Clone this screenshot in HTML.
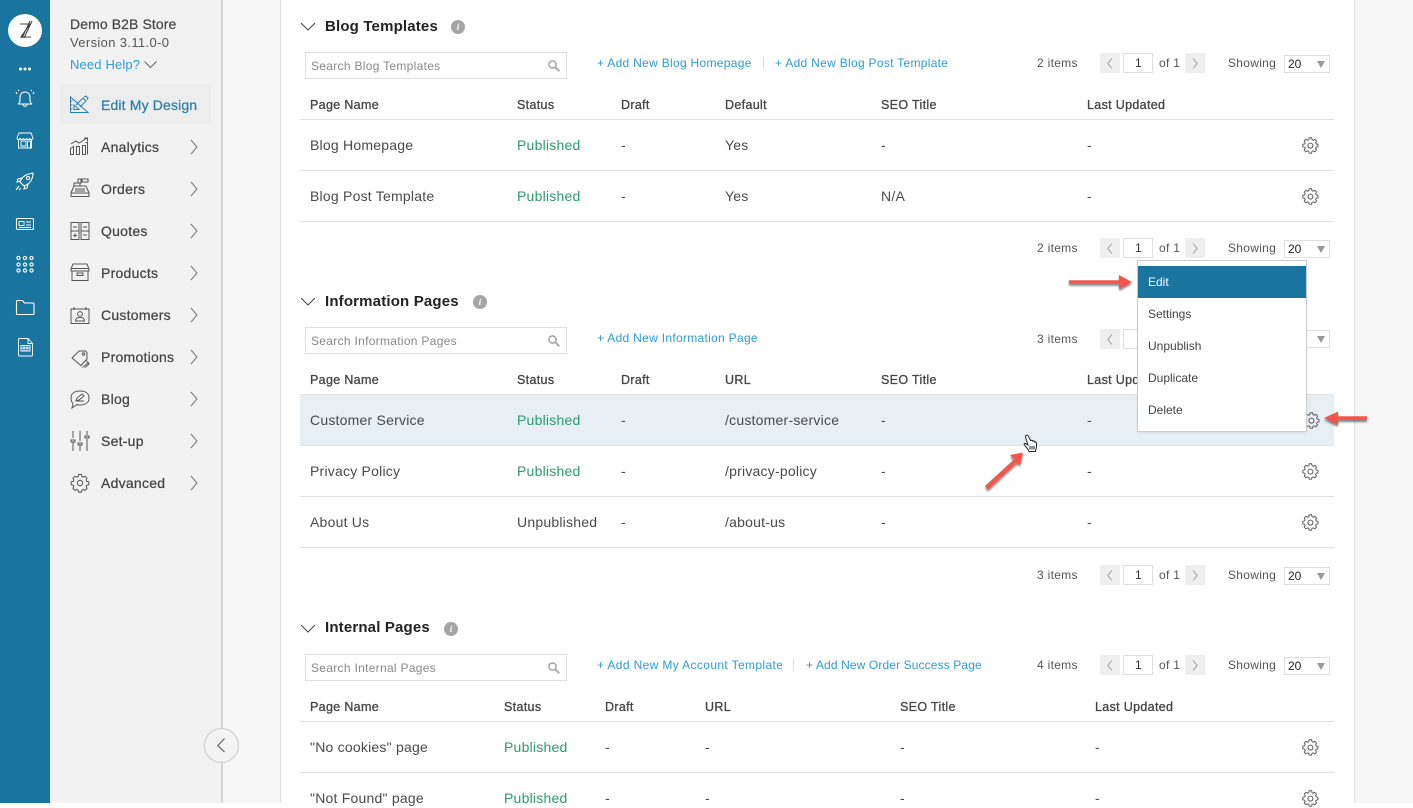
<!DOCTYPE html>
<html><head><meta charset="utf-8"><style>
html,body{margin:0;padding:0}
body{width:1413px;height:803px;overflow:hidden;position:relative;background:#fff;font-family:"Liberation Sans",sans-serif;font-size:14px;color:#4a4a4a}
.a{position:absolute}
.t{position:absolute;line-height:20px;white-space:nowrap;letter-spacing:.22px}
.h{font-size:12.5px;letter-spacing:.33px;color:#444;-webkit-text-stroke:.3px #444}
.g{color:#2c9a6c}
.l{color:#2d9cd6;font-size:12px;letter-spacing:.3px}
.s{font-size:12px;color:#555;letter-spacing:.3px}
.ttl{font-size:15px;font-weight:bold;color:#222;letter-spacing:.17px}
.ln{position:absolute;left:300px;width:1034px;height:1px;background:#e2e2e2}
.nav{font-size:14px;color:#444;left:101px;letter-spacing:.25px;-webkit-text-stroke:.25px #444}
.box{position:absolute;box-sizing:border-box;background:#fff;border:1px solid #dfdfdf}
.pg{position:absolute;width:20px;height:20px;background:#eee}
.tri{position:absolute;left:1317px;width:0;height:0;border-left:4px solid transparent;border-right:4px solid transparent;border-top:7px solid #999}
.m{position:absolute;left:1148px;font-size:12px;color:#444;line-height:20px}
svg{position:absolute;overflow:visible;fill:none}
.ic{stroke:#555;stroke-width:1}
.w{stroke:#fff;stroke-width:1.1}
</style></head><body>
<svg width="0" height="0" style="position:absolute"><defs>
<g id="gear"><g transform="translate(0 .4) scale(.94)"><path d="M6.200.700h2.600l.4 2 1.200.6 1.800-1 1.800 1.900-1 1.700.5 1.300 2 .5v2.600l-2 .5-.5 1.200 1 1.800-1.800 1.800-1.800-1-1.200.5-.5 2H6.200l-.4-2-1.300-.5-1.800 1-1.800-1.800 1-1.800-.5-1.200-2-.5V7.700l2-.5.5-1.300-1-1.700 1.800-1.900 1.800 1 1.300-.6z" transform="translate(.4 -.3)" stroke="#555" stroke-width="1"/><circle cx="7.900" cy="8.700" r="2.700" stroke="#555" stroke-width="1"/></g></g>
<g id="cr"><path d="M0 0l6 7-6 7" stroke="#777" stroke-width="1"/></g>
<g id="mag"><circle cx="4.500" cy="4.500" r="3.600" stroke="#aaa" stroke-width="1.600"/><path d="M7.300 7.300l4 4" stroke="#aaa" stroke-width="2"/></g>
<g id="dn"><path d="M0 0l7 7 7-7" stroke="#444" stroke-width="1"/></g>
<path id="pgc" d="M5 .5L.8 5.500 5 10.500M86 .5l4.200 5-4.200 5" stroke="#999" stroke-width=".9"/>
</defs></svg>

<!-- backgrounds -->
<div class="a" style="left:0;top:0;width:50px;height:803px;background:#1a74a0"></div>
<div class="a" style="left:50px;top:0;width:171px;height:803px;background:#f2f2f2"></div>
<div class="a" style="left:221px;top:0;width:2px;height:803px;background:#d4d4d4"></div>
<div class="a" style="left:223px;top:0;width:57px;height:803px;background:#f7f7f7"></div>
<div class="a" style="left:280px;top:0;width:1px;height:803px;background:#e2e2e2"></div>
<div class="a" style="left:1354px;top:0;width:59px;height:803px;background:#f6f6f6;border-left:1px solid #e2e2e2"></div>

<!-- rail -->
<div class="a" style="left:8px;top:14px;width:34px;height:33px;border-radius:50%;background:#fff"></div>
<svg style="left:0;top:0" width="50" height="360">
<path d="M20 24h10l-9 13h10M22 38l8-17M24 38l8-17" stroke="#444" stroke-width="1.100"/>
<circle cx="20.500" cy="69" r="1.500" fill="#fff"/><circle cx="25" cy="69" r="1.500" fill="#fff"/><circle cx="29.500" cy="69" r="1.500" fill="#fff"/>
<g class="w"><path d="M18 104c2-1 2-3 2-6 0-4 2-6 5-6s5 2 5 6c0 3 0 5 2 6zM23 104c0 3 4 3 4 0M17 94l-1-2M33 94l1-2M19 91l-1-1M31 91l1-1"/>
<path d="M18.500 139v9h13v-9M17 138l2-5h12l2 5c0 2-3.200 2-3.200 0 0 2-3.200 2-3.200 0 0 2-3.200 2-3.200 0 0 2-3.200 2-3.200 0 0 2-3.200 2-3.200 0zM21 141h5v5h-5zM27.500 141h3v7h-3z" stroke-width=".9"/>
<path d="M20 182c2-6 7-8 13-9 0 6-3 11-9 13zM22 178l-4 1-1 3 3-1M28 184l-1 4-3 1 1-3M19 186l-3 4M21 188l-2 2"/><circle cx="28" cy="178" r="1.600"/>
<rect x="16.500" y="218.500" width="17" height="11" rx="1"/><path d="M19 221.500h5v4h-5zM26 222h5M26 225h5M19 227.500h12" stroke-width=".9"/>
<circle cx="18.500" cy="258" r="1.600"/><circle cx="25" cy="258" r="1.600"/><circle cx="31.500" cy="258" r="1.600"/><circle cx="18.500" cy="264.500" r="1.600"/><circle cx="25" cy="264.500" r="1.600"/><circle cx="31.500" cy="264.500" r="1.600"/><circle cx="18.500" cy="270.500" r="1.600"/><circle cx="25" cy="270.500" r="1.600"/><circle cx="31.500" cy="270.500" r="1.600"/>
<path d="M16.500 302c0-1 .5-1.500 1-1.500h5l2 2.500h9c.5 0 .5.500.5 1v9.500c0 .5-.5 1-1 1H17.500c-.5 0-1-.5-1-1z"/>
<path d="M18.500 339.500c0-.5.5-1 1-1h8.500l4.500 5v11.500c0 .5-.5 1-1 1h-12c-.5 0-1-.5-1-1zM28 338.500v5h4.500M21 345.500h9v5.500h-9zM21 348h9M24 345.500v5.500M27 345.500v5.500" stroke-width=".9"/></g>
</svg>

<!-- sidebar -->
<div class="t" style="left:70px;top:14px;font-size:14px;color:#444;letter-spacing:.1px;-webkit-text-stroke:.2px #444">Demo B2B Store</div>
<div class="t" style="left:70px;top:33px;font-size:13px;color:#555;letter-spacing:.35px">Version 3.11.0-0</div>
<div class="t" style="left:70px;top:55px;font-size:13px;color:#2d9cd6;letter-spacing:.15px">Need Help?</div>
<svg style="left:144px;top:61px" width="13" height="8"><path d="M.5.500l6 6 6-6" stroke="#666"/></svg>
<div class="a" style="left:60px;top:84px;width:151px;height:40px;background:#ededed;border-radius:2px"></div>
<div class="t" style="left:101px;top:95px;font-size:14px;color:#2a7ea8;letter-spacing:.15px;-webkit-text-stroke:.25px #2a7ea8">Edit My Design</div>
<svg style="left:70px;top:95px" width="20" height="20"><path d="M.500 2v15.500h17.500L.500 2zM4 10v4.500h5zM.500 6h2M.500 10h2M.500 14h2M6 10l7-7 3 3-6 6M14 2l2-1 2 2-1 2" stroke="#2a7ea8"/></svg>
<div class="t nav" style="top:137px">Analytics</div><div class="t nav" style="top:179px">Orders</div><div class="t nav" style="top:221px">Quotes</div><div class="t nav" style="top:263px">Products</div><div class="t nav" style="top:305px">Customers</div><div class="t nav" style="top:347px">Promotions</div><div class="t nav" style="top:389px">Blog</div><div class="t nav" style="top:431px">Set-up</div><div class="t nav" style="top:473px">Advanced</div>
<svg style="left:191px;top:0" width="10" height="500"><use href="#cr" y="140"/><use href="#cr" y="182"/><use href="#cr" y="224"/><use href="#cr" y="266"/><use href="#cr" y="308"/><use href="#cr" y="350"/><use href="#cr" y="392"/><use href="#cr" y="434"/><use href="#cr" y="476"/></svg>
<svg style="left:70px;top:0" width="20" height="500"><g class="ic">
<path d="M.500 154.500v-6l3-2v8zM6.500 154.500v-8h3v8zM12.500 154.500v-9h3v9zM17.500 154.500v-12h-2M1 144l5-3 3 2 8-5M14 138h3.500v3.500"/>
<path d="M1 193l3-7h12l3 7v3.500H1zM1 193h18M4 183h6v3H4zM12 179h6v3h-6zM8 179h3v4H8zM5 189h10M5 191h10"/>
<path d="M1 222.500h8v17H1zM11 222.500h8v17h-8zM1 231h8M11 231h8M3 227h4M13 227h4M3 235.500h4M5 233.500v4M13 235h4"/>
<path d="M1 269l2-5h14l2 5v2H1zM2 271v9.500h16V271M1 268.500h18M7 273h6v2.500H7z"/>
<path d="M1 309h18v14.500H1zM4 307v3M16 307v3"/><circle cx="10" cy="314" r="2.400"/><path d="M5.500 321c0-3 2-3.500 4.500-3.500s4.500.5 4.500 3.500z"/>
<path d="M2 358l7-7h6.500l1.500 1.500v6.500l-6 6.500zM16 360l2 3-5.500 4.500M18 362l1 2-4 3.500"/><circle cx="13.500" cy="354" r="1.300"/>
<path d="M1 398c0-5 4-7 9-7s9 2 9 7-4 7-9 7c-1 0-2 0-3-.5L2 408l1-4c-1-1.500-2-3.500-2-6zM6 401l1-3 5-4 2 2-5 4zM6 401h8"/>
<path d="M3 431v7M3 442v9M10 431v10M10 445v6M17 431v4M17 439v12M1 440h4v2H1zM8 443h4v2H8zM15 436h4v2h-4z"/>
<path d="M8.500 474.500h3l.4 2 1.400.7 1.800-1 2 2-1 1.800.7 1.400 2 .4v3l-2 .4-.7 1.400 1 1.800-2 2-1.800-1-1.400.7-.4 2h-3l-.4-2-1.400-.7-1.800 1-2-2 1-1.800-.7-1.400-2-.4v-3l2-.4.7-1.400-1-1.800 2-2 1.800 1 1.400-.7z"/><circle cx="10" cy="483" r="2.700"/>
</g></svg>
<div class="a" style="left:204px;top:728px;width:33px;height:33px;border:1px solid #ccc;border-radius:50%;background:#f4f4f4"></div>
<svg style="left:217px;top:738px" width="9" height="15"><path d="M7.500.500L.900 7.500l6.600 6.500" stroke="#555"/></svg>

<!-- section 1 -->
<svg style="left:300.500px;top:22.500px" width="14" height="8"><use href="#dn"/></svg>
<div class="t ttl" style="left:325px;top:17px">Blog Templates</div>
<div class="a" style="left:451px;top:20px;width:14px;height:14px;border-radius:50%;background:#a5a5a5;color:#fff;font:italic bold 9px/14px 'Liberation Serif',serif;text-align:center">i</div>
<div class="box" style="left:305px;top:52px;width:262px;height:27px"></div>
<div class="t s" style="left:311px;top:56px;color:#888">Search Blog Templates</div>
<svg style="left:548px;top:60px" width="12" height="12"><use href="#mag"/></svg>
<div class="t l" style="left:597px;top:53px">+ Add New Blog Homepage</div>
<div class="a" style="left:763px;top:57px;width:1px;height:12px;background:#ddd"></div>
<div class="t l" style="left:775px;top:53px">+ Add New Blog Post Template</div>
<div class="t s" style="left:1037px;top:53px">2 items</div><div class="pg" style="left:1100px;top:53px"></div><div class="box" style="left:1123px;top:53px;width:30px;height:20px"></div><div class="t s" style="left:1135px;top:53px;color:#333">1</div><div class="t s" style="left:1159px;top:53px">of 1</div><div class="pg" style="left:1185px;top:53px"></div><div class="t s" style="left:1228px;top:53px">Showing</div><div class="box" style="left:1284px;top:55px;width:46px;height:18px"></div><div class="t s" style="left:1288px;top:54px;color:#222;letter-spacing:0">20</div><div class="tri" style="top:61px"></div>
<svg style="left:1107px;top:58px" width="90" height="11"><use href="#pgc"/></svg>
<div class="t h" style="left:310px;top:95px">Page Name</div><div class="t h" style="left:517px;top:95px">Status</div><div class="t h" style="left:621px;top:95px">Draft</div><div class="t h" style="left:725px;top:95px">Default</div><div class="t h" style="left:881px;top:95px">SEO Title</div><div class="t h" style="left:1087px;top:95px">Last Updated</div>
<div class="ln" style="top:119px"></div>
<div class="t" style="left:310px;top:135px">Blog Homepage</div><div class="t g" style="left:517px;top:135px">Published</div><div class="t" style="left:621px;top:135px">-</div><div class="t" style="left:725px;top:135px">Yes</div><div class="t" style="left:881px;top:135px">-</div><div class="t" style="left:1087px;top:135px">-</div>
<svg style="left:1303px;top:137px" width="16" height="16"><use href="#gear"/></svg>
<div class="ln" style="top:170px"></div>
<div class="t" style="left:310px;top:186px">Blog Post Template</div><div class="t g" style="left:517px;top:186px">Published</div><div class="t" style="left:621px;top:186px">-</div><div class="t" style="left:725px;top:186px">Yes</div><div class="t" style="left:881px;top:186px">N/A</div><div class="t" style="left:1087px;top:186px">-</div>
<svg style="left:1303px;top:188px" width="16" height="16"><use href="#gear"/></svg>
<div class="ln" style="top:221px"></div>
<div class="t s" style="left:1037px;top:238px">2 items</div><div class="pg" style="left:1100px;top:238px"></div><div class="box" style="left:1123px;top:238px;width:30px;height:20px"></div><div class="t s" style="left:1135px;top:238px;color:#333">1</div><div class="t s" style="left:1159px;top:238px">of 1</div><div class="pg" style="left:1185px;top:238px"></div><div class="t s" style="left:1228px;top:238px">Showing</div><div class="box" style="left:1284px;top:240px;width:46px;height:18px"></div><div class="t s" style="left:1288px;top:239px;color:#222;letter-spacing:0">20</div><div class="tri" style="top:246px"></div>
<svg style="left:1107px;top:243px" width="90" height="11"><use href="#pgc"/></svg>

<!-- section 2 -->
<svg style="left:300.500px;top:297.500px" width="14" height="8"><use href="#dn"/></svg>
<div class="t ttl" style="left:325px;top:292px">Information Pages</div>
<div class="a" style="left:473px;top:295px;width:14px;height:14px;border-radius:50%;background:#a5a5a5;color:#fff;font:italic bold 9px/14px 'Liberation Serif',serif;text-align:center">i</div>
<div class="box" style="left:305px;top:327px;width:262px;height:27px"></div>
<div class="t s" style="left:311px;top:331px;color:#888">Search Information Pages</div>
<svg style="left:548px;top:335px" width="12" height="12"><use href="#mag"/></svg>
<div class="t l" style="left:597px;top:328px">+ Add New Information Page</div>
<div class="t s" style="left:1037px;top:329px">3 items</div><div class="pg" style="left:1100px;top:329px"></div><div class="box" style="left:1123px;top:329px;width:30px;height:20px"></div><div class="box" style="left:1284px;top:330px;width:46px;height:18px"></div><div class="tri" style="top:336px"></div>
<svg style="left:1107px;top:334px" width="6" height="11"><path d="M5 .5L.8 5.500 5 10.500" stroke="#999" stroke-width=".9"/></svg>
<div class="t h" style="left:310px;top:370px">Page Name</div><div class="t h" style="left:517px;top:370px">Status</div><div class="t h" style="left:621px;top:370px">Draft</div><div class="t h" style="left:725px;top:370px">URL</div><div class="t h" style="left:881px;top:370px">SEO Title</div><div class="t h" style="left:1087px;top:370px">Last Updated</div>
<div class="a" style="left:300px;top:395px;width:1034px;height:50px;background:#e7eff5"></div>
<div class="ln" style="top:394px"></div>
<div class="t" style="left:310px;top:410px">Customer Service</div><div class="t g" style="left:517px;top:410px">Published</div><div class="t" style="left:621px;top:410px">-</div><div class="t" style="left:725px;top:410px">/customer-service</div><div class="t" style="left:881px;top:410px">-</div><div class="t" style="left:1087px;top:410px">-</div>
<svg style="left:1304px;top:412px" width="16" height="16"><use href="#gear"/></svg>
<div class="ln" style="top:445px"></div>
<div class="t" style="left:310px;top:461px">Privacy Policy</div><div class="t g" style="left:517px;top:461px">Published</div><div class="t" style="left:621px;top:461px">-</div><div class="t" style="left:725px;top:461px">/privacy-policy</div><div class="t" style="left:881px;top:461px">-</div><div class="t" style="left:1087px;top:461px">-</div>
<svg style="left:1303px;top:463px" width="16" height="16"><use href="#gear"/></svg>
<div class="ln" style="top:496px"></div>
<div class="t" style="left:310px;top:512px">About Us</div><div class="t" style="left:517px;top:512px">Unpublished</div><div class="t" style="left:621px;top:512px">-</div><div class="t" style="left:725px;top:512px">/about-us</div><div class="t" style="left:881px;top:512px">-</div><div class="t" style="left:1087px;top:512px">-</div>
<svg style="left:1303px;top:514px" width="16" height="16"><use href="#gear"/></svg>
<div class="ln" style="top:547px"></div>
<div class="t s" style="left:1037px;top:565px">3 items</div><div class="pg" style="left:1100px;top:565px"></div><div class="box" style="left:1123px;top:565px;width:30px;height:20px"></div><div class="t s" style="left:1135px;top:565px;color:#333">1</div><div class="t s" style="left:1159px;top:565px">of 1</div><div class="pg" style="left:1185px;top:565px"></div><div class="t s" style="left:1228px;top:565px">Showing</div><div class="box" style="left:1284px;top:567px;width:46px;height:18px"></div><div class="t s" style="left:1288px;top:566px;color:#222;letter-spacing:0">20</div><div class="tri" style="top:573px"></div>
<svg style="left:1107px;top:570px" width="90" height="11"><use href="#pgc"/></svg>

<!-- section 3 -->
<svg style="left:300.500px;top:624.500px" width="14" height="8"><use href="#dn"/></svg>
<div class="t ttl" style="left:325px;top:618px">Internal Pages</div>
<div class="a" style="left:444px;top:622px;width:14px;height:14px;border-radius:50%;background:#a5a5a5;color:#fff;font:italic bold 9px/14px 'Liberation Serif',serif;text-align:center">i</div>
<div class="box" style="left:305px;top:654px;width:262px;height:27px"></div>
<div class="t s" style="left:311px;top:658px;color:#888">Search Internal Pages</div>
<svg style="left:548px;top:662px" width="12" height="12"><use href="#mag"/></svg>
<div class="t l" style="left:597px;top:655px;letter-spacing:.37px">+ Add New My Account Template</div>
<div class="a" style="left:793px;top:659px;width:1px;height:12px;background:#ddd"></div>
<div class="t l" style="left:806px;top:655px;letter-spacing:.12px">+ Add New Order Success Page</div>
<div class="t s" style="left:1037px;top:655px">4 items</div><div class="pg" style="left:1100px;top:655px"></div><div class="box" style="left:1123px;top:655px;width:30px;height:20px"></div><div class="t s" style="left:1135px;top:655px;color:#333">1</div><div class="t s" style="left:1159px;top:655px">of 1</div><div class="pg" style="left:1185px;top:655px"></div><div class="t s" style="left:1228px;top:655px">Showing</div><div class="box" style="left:1284px;top:657px;width:46px;height:18px"></div><div class="t s" style="left:1288px;top:656px;color:#222;letter-spacing:0">20</div><div class="tri" style="top:663px"></div>
<svg style="left:1107px;top:660px" width="90" height="11"><use href="#pgc"/></svg>
<div class="t h" style="left:310px;top:697px">Page Name</div><div class="t h" style="left:504px;top:697px">Status</div><div class="t h" style="left:605px;top:697px">Draft</div><div class="t h" style="left:705px;top:697px">URL</div><div class="t h" style="left:900px;top:697px">SEO Title</div><div class="t h" style="left:1095px;top:697px">Last Updated</div>
<div class="ln" style="top:721px"></div>
<div class="t" style="left:310px;top:737px">"No cookies" page</div><div class="t g" style="left:504px;top:737px">Published</div><div class="t" style="left:605px;top:737px">-</div><div class="t" style="left:705px;top:737px">-</div><div class="t" style="left:900px;top:737px">-</div><div class="t" style="left:1095px;top:737px">-</div>
<svg style="left:1303px;top:739px" width="16" height="16"><use href="#gear"/></svg>
<div class="ln" style="top:772px"></div>
<div class="t" style="left:310px;top:788px">"Not Found" page</div><div class="t g" style="left:504px;top:788px">Published</div><div class="t" style="left:605px;top:788px">-</div><div class="t" style="left:705px;top:788px">-</div><div class="t" style="left:900px;top:788px">-</div><div class="t" style="left:1095px;top:788px">-</div>
<svg style="left:1303px;top:790px" width="16" height="16"><use href="#gear"/></svg>

<!-- popup menu -->
<div class="a" style="left:1137px;top:260px;width:168px;height:170px;background:#fff;border:1px solid #ccc;box-shadow:0 1px 2px rgba(0,0,0,.08)"></div>
<div class="a" style="left:1138px;top:266px;width:168px;height:32px;background:#1a74a0"></div>
<div class="m" style="top:272px;color:#fff">Edit</div><div class="m" style="top:304px">Settings</div><div class="m" style="top:336px">Unpublish</div><div class="m" style="top:368px">Duplicate</div><div class="m" style="top:400px">Delete</div>

<!-- arrows -->
<svg style="left:960px;top:260px" width="420" height="240">
<defs><filter id="sd" x="-20%" y="-50%" width="140%" height="200%"><feDropShadow dx="0" dy="2" stdDeviation="1" flood-color="#000" flood-opacity=".5"/></filter></defs>
<g filter="url(#sd)" fill="#f4574c">
<path d="M109 20.200h50v-5.200l13 7-13 7v-5.200h-50z"/>
<path d="M407 156.200h-29v-4.700l-14 6.500 14 7v-5h29z"/>
<path d="M63 192.500L50 195l4 4.500L25 226l3 3.500 29-27 3 2.500z"/>
</g></svg>
<!-- cursor -->
<svg style="left:1023px;top:434px" width="15" height="19"><path d="M3 1.500c1-1 2 0 2.500 1l2 4c1-.5 2 0 2 .5 1-.5 2 0 2 1 1-.5 2 .5 2 1.500v3c0 2-1 3-1 5H6c-.5-1.500-3-5-4.500-6.500-1-1 0-2 1-1.500L5 11 2.500 3c-.2-.5 0-1 .5-1.500z" fill="#fff" stroke="#222" stroke-width="1"/><path d="M7 12v3.500M9 12v3.500M11 12v3.500" stroke="#222"/></svg>
</body></html>
